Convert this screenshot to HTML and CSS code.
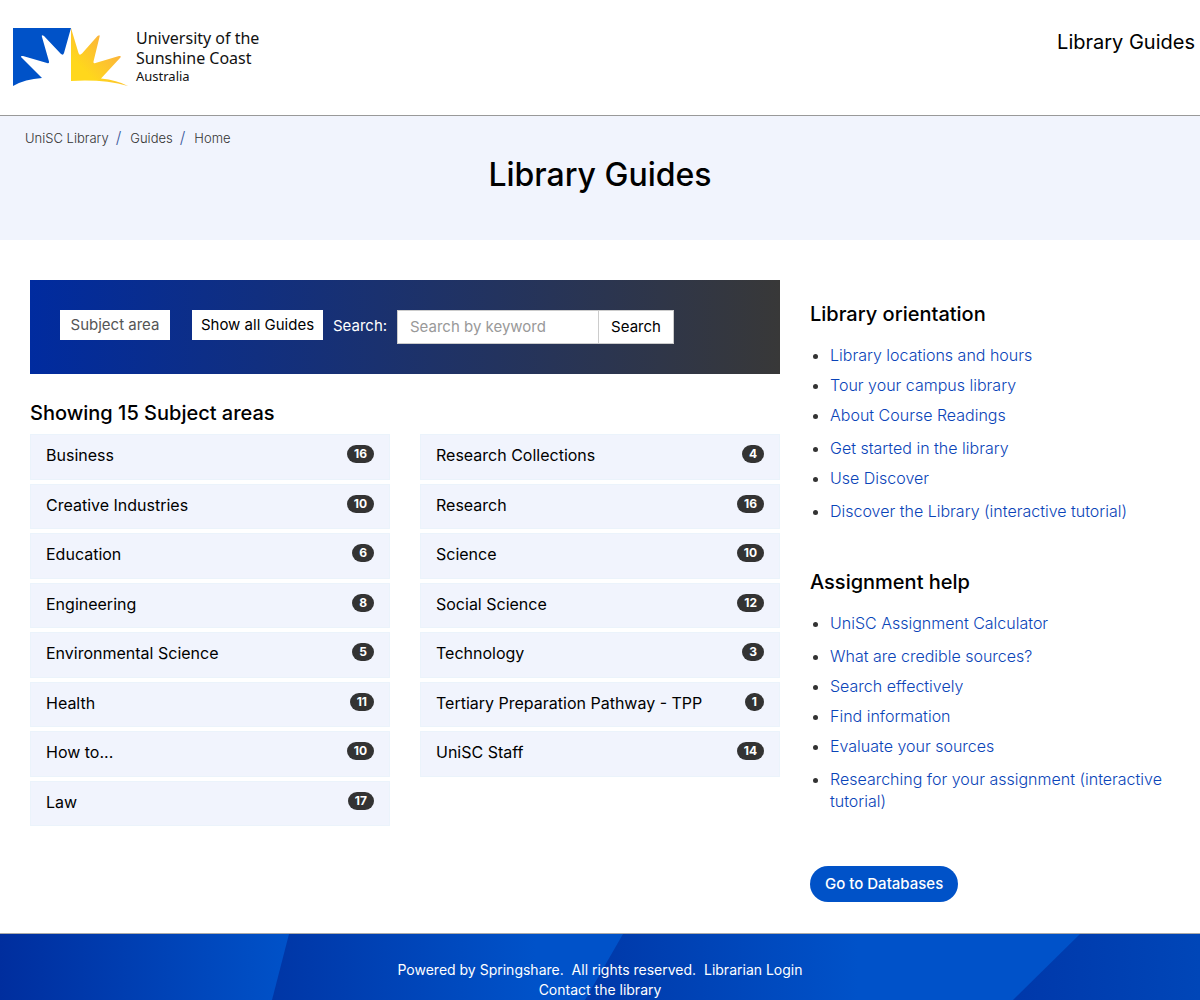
FILE: index.html
```html
<!DOCTYPE html>
<html lang="en">
<head>
<meta charset="utf-8">
<meta name="viewport" content="width=device-width, initial-scale=1">
<title>Library Guides - UniSC Library</title>
<link rel="stylesheet" href="styles.css">
</head>
<body>
<header class="site-header">
  <a class="brand" href="#">
    <svg class="brand-mark" viewBox="0 0 115 58" width="115" height="58" aria-hidden="true">
      <defs>
        <linearGradient id="sun" x1="0" y1="1" x2="1" y2="0">
          <stop offset="0.25" stop-color="#ffd71c"/>
          <stop offset="0.75" stop-color="#fbb040"/>
        </linearGradient>
      </defs>
      <path fill="#0052c8" d="M0 0H58L51 25Q50 28 47.500 25.500L31 8Q28 6 29 9L36 33.500Q36.500 36 34 35L10 28Q6.500 27.500 9 30L29 50Q12 51 0 58Z"/>
      <path fill="url(#sun)" d="M58 0L65.500 25Q66.500 28 69 25.500L84.500 8Q87.500 6 86.500 9L80.500 33.500Q80 36 82.500 35L106 28Q109 27.500 107 30L88 50.500Q104 52 115 58Q90 51 58 53Z"/>
    </svg>
    <span class="brand-name">University of the<br>Sunshine Coast<small class="brand-country">Australia</small></span>
  </a>
  <a class="header-link" href="#">Library Guides</a>
</header>

<section class="hero">
  <nav aria-label="Breadcrumb">
    <ol class="breadcrumb">
      <li><a href="#">UniSC Library</a></li>
      <li><a href="#">Guides</a></li>
      <li>Home</li>
    </ol>
  </nav>
  <h1 class="page-title">Library Guides</h1>
</section>

<main class="content">
  <div class="guides">
    <form class="filter-bar">
      <button class="filter-button filter-current" type="button">Subject area</button>
      <button class="filter-button filter-all" type="button">Show all Guides</button>
      <label class="search-label" for="keyword">Search:</label>
      <span class="search-group">
        <input class="search-input" id="keyword" type="text" placeholder="Search by keyword">
        <button class="search-button" type="submit">Search</button>
      </span>
    </form>
    <h2 class="section-title">Showing 15 Subject areas</h2>
    <ul class="subjects">
      <li><a class="subject" href="#">Business <span class="badge">16</span></a></li>
      <li><a class="subject" href="#">Creative Industries <span class="badge">10</span></a></li>
      <li><a class="subject" href="#">Education <span class="badge">6</span></a></li>
      <li><a class="subject" href="#">Engineering <span class="badge">8</span></a></li>
      <li><a class="subject" href="#">Environmental Science <span class="badge">5</span></a></li>
      <li><a class="subject" href="#">Health <span class="badge">11</span></a></li>
      <li><a class="subject" href="#">How to... <span class="badge">10</span></a></li>
      <li><a class="subject" href="#">Law <span class="badge">17</span></a></li>
      <li><a class="subject" href="#">Research Collections <span class="badge">4</span></a></li>
      <li><a class="subject" href="#">Research <span class="badge">16</span></a></li>
      <li><a class="subject" href="#">Science <span class="badge">10</span></a></li>
      <li><a class="subject" href="#">Social Science <span class="badge">12</span></a></li>
      <li><a class="subject" href="#">Technology <span class="badge">3</span></a></li>
      <li><a class="subject" href="#">Tertiary Preparation Pathway - TPP <span class="badge">1</span></a></li>
      <li><a class="subject" href="#">UniSC Staff <span class="badge">14</span></a></li>
    </ul>
  </div>

  <aside class="sidebar">
    <section class="side-section">
      <h2 class="section-title">Library orientation</h2>
      <ul class="links">
        <li><a href="#">Library locations and hours</a></li>
        <li><a href="#">Tour your campus library</a></li>
        <li class="spaced"><a href="#">About Course Readings</a></li>
        <li><a href="#">Get started in the library</a></li>
        <li class="spaced"><a href="#">Use Discover</a></li>
        <li><a href="#">Discover the Library (interactive tutorial)</a></li>
      </ul>
    </section>
    <section class="side-section">
      <h2 class="section-title">Assignment help</h2>
      <ul class="links">
        <li class="spaced"><a href="#">UniSC Assignment Calculator</a></li>
        <li><a href="#">What are credible sources?</a></li>
        <li><a href="#">Search effectively</a></li>
        <li><a href="#">Find information</a></li>
        <li class="spaced"><a href="#">Evaluate your sources</a></li>
        <li><a href="#">Researching for your assignment (interactive tutorial)</a></li>
      </ul>
    </section>
    <a class="databases" href="#">Go to Databases</a>
  </aside>
</main>

<footer class="site-footer">
  <svg class="footer-art" viewBox="0 0 1200 67" preserveAspectRatio="none" aria-hidden="true">
    <defs>
      <linearGradient id="band-a"><stop offset="0" stop-color="#002e9e"/><stop offset="1" stop-color="#0052c9"/></linearGradient>
      <linearGradient id="band-b"><stop offset="0" stop-color="#0036a6"/><stop offset="0.75" stop-color="#0052c9"/></linearGradient>
      <linearGradient id="band-c"><stop offset="0" stop-color="#0038a8"/><stop offset="0.55" stop-color="#0052c9"/></linearGradient>
      <linearGradient id="band-d"><stop offset="0" stop-color="#0038aa"/><stop offset="1" stop-color="#0046b8"/></linearGradient>
    </defs>
    <path fill="url(#band-a)" d="M0 0H290V67H0Z"/>
    <path fill="url(#band-b)" d="M289 0H624V67H272Z"/>
    <path fill="url(#band-c)" d="M623 0H1082V67H585Z"/>
    <path fill="url(#band-d)" d="M1080 0H1200V67H1013Z"/>
  </svg>
  <div class="footer-text">
    <p>Powered by <a href="#">Springshare.</a>&nbsp; All rights reserved.&nbsp; <a href="#">Librarian Login</a></p>
    <p><a href="#">Contact the library</a></p>
  </div>
</footer>
</body>
</html>
```
FILE: styles.css
```css
* {
  box-sizing: border-box;
}

body {
  margin: 0;
  min-height: 100vh;
  display: flex;
  flex-direction: column;
  background: #fff;
  color: #333;
  font-family: Inter, "Open Sans", sans-serif;
  font-size: 16px;
  line-height: 22px;
}

a {
  color: inherit;
  text-decoration: none;
}

h1, h2, p, ul, ol {
  margin: 0;
  padding: 0;
}

/* Header */
.site-header {
  display: flex;
  justify-content: space-between;
  align-items: flex-start;
  min-height: 116px;
  padding: 28px 5px 0 13px;
  border-bottom: 1px solid #999;
}

.brand {
  display: flex;
  gap: 8px;
  color: #111;
}

.brand-name {
  font-family: "Noto Sans", sans-serif;
  font-size: 16px;
  line-height: 20px;
}

.brand-country {
  display: block;
  font-size: 13px;
  line-height: 16px;
}

.header-link {
  margin-top: 2px;
  color: #000;
  font-size: 20px;
  line-height: 24px;
}

/* Title band */
.hero {
  min-height: 124px;
  padding: 10px 25px;
  background: #f1f4fd;
}

.breadcrumb {
  display: flex;
  align-items: baseline;
  list-style: none;
  font-size: 13px;
  font-weight: 300;
}

.breadcrumb li + li::before {
  content: "/";
  padding: 0 9px 0 7px;
  color: #3a5a9c;
  font-size: 16px;
}

.page-title {
  margin-top: 6px;
  color: #000;
  font-size: 32px;
  font-weight: 500;
  line-height: 40px;
  text-align: center;
}

/* Main columns */
.content {
  display: grid;
  grid-template-columns: 25fr 12fr;
  gap: 30px;
  padding: 40px 30px 31px;
}

.filter-bar {
  display: flex;
  align-items: flex-start;
  min-height: 94px;
  padding: 30px;
  background: linear-gradient(90deg, #002b9f, #383838);
}

.filter-button,
.search-button {
  border: 0;
  background: #fff;
  color: #000;
  font: inherit;
  font-size: 15px;
  white-space: nowrap;
}

.filter-button {
  height: 30px;
  padding: 0 8px;
}

.filter-current {
  width: 110px;
  margin-right: 22px;
  color: #555;
}

.filter-all {
  width: 131px;
}

.search-label {
  width: 74px;
  padding: 5px 0 0 10px;
  color: #fff;
  font-size: 15px;
}

.search-group {
  display: flex;
  width: 277px;
  height: 34px;
  border: 1px solid #ccc;
}

.search-input {
  flex: 1;
  min-width: 0;
  padding: 0 12px;
  border: 0;
  background: #fff;
  font: inherit;
  font-size: 15px;
}

.search-input::placeholder {
  color: #999;
}

.search-button {
  width: 75px;
  border-left: 1px solid #ccc;
}

.section-title {
  color: #000;
  font-size: 20px;
  font-weight: 500;
  line-height: 24px;
}

.guides .section-title {
  margin: 27px 0 9px;
}

.subjects {
  display: grid;
  grid-auto-flow: column;
  grid-template-rows: repeat(8, 1fr);
  grid-template-columns: 1fr 1fr;
  gap: 4px 30px;
  min-height: 392px;
  list-style: none;
}

.subjects li {
  display: grid;
}

.subject {
  display: flex;
  justify-content: space-between;
  align-items: flex-start;
  padding: 9px 15px;
  border: 1px solid #ebf3fb;
  background: #f1f4fd;
  color: #000;
  font-size: 16px;
}

.badge {
  margin-top: 1px;
  padding: 0 7px;
  border-radius: 9px;
  background: #333;
  color: #fff;
  font-size: 12px;
  font-weight: 700;
  line-height: 18px;
}

/* Sidebar */
.sidebar {
  padding-top: 22px;
}

.side-section {
  margin-bottom: 48px;
}

.links {
  display: flex;
  flex-direction: column;
  gap: 8px;
  margin-top: 18px;
  padding-left: 20px;
  font-weight: 300;
}

.links a {
  color: #0a44b8;
}

.links .spaced {
  margin-bottom: 3px;
}

.databases {
  display: inline-block;
  margin-top: 6px;
  padding: 7px 15px;
  border-radius: 18px;
  background: #0052c8;
  color: #fff;
  font-size: 15px;
  font-weight: 500;
}

/* Footer */
.site-footer {
  position: relative;
  flex: 1;
  padding: 26px 20px 0;
  border-top: 1px solid #aaa;
  background: #0048be;
  color: #fff;
  font-size: 14px;
  line-height: 20px;
  text-align: center;
}

.footer-art {
  position: absolute;
  inset: 0;
  width: 100%;
  height: 100%;
}

.footer-text {
  position: relative;
}
```
